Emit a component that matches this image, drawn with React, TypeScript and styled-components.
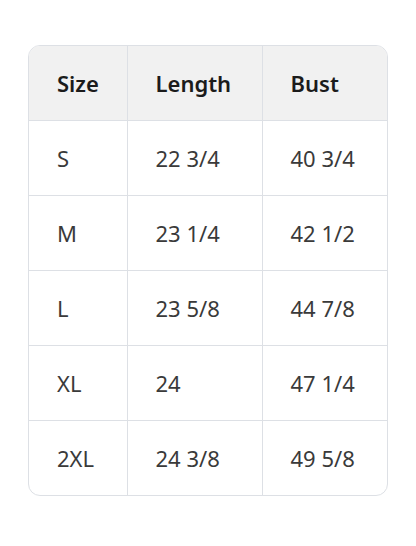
import React from "react";
import styled, { createGlobalStyle } from "styled-components";

const Global = createGlobalStyle`
  html, body { margin: 0; padding: 0; background: #ffffff; }
  body { font-family: "Noto Sans", "Open Sans", sans-serif; }
`;

const Page = styled.div`
  padding: 45px 0 0 28px;
`;

const Frame = styled.div`
  width: 360px;
  border: 1px solid #dde0e5;
  border-radius: 12px;
  overflow: hidden;
  box-sizing: border-box;
`;

const Table = styled.table`
  width: 100%;
  border-collapse: collapse;
  table-layout: fixed;
`;

const HeadRow = styled.tr`
  background: #f1f1f1;
`;

const Th = styled.th<{ $w: number }>`
  box-sizing: border-box;
  width: ${(p) => p.$w}px;
  height: 74px;
  padding: 0 0 0 28px;
  text-align: left;
  font-size: 22px;
  font-weight: 600;
  color: #1b1b1b;
  border-right: 1px solid #dde0e5;
  border-bottom: 1px solid #dde0e5;
  &:last-child { border-right: none; }
`;

const Td = styled.td`
  height: 74px;
  padding: 0 0 0 28px;
  font-size: 22px;
  font-weight: 400;
  color: #3a3a3a;
  border-right: 1px solid #dde0e5;
  border-bottom: 1px solid #dde0e5;
  &:last-child { border-right: none; }
  tr:last-child > & { border-bottom: none; }
`;

const rows = [
  ["S", "22 3/4", "40 3/4"],
  ["M", "23 1/4", "42 1/2"],
  ["L", "23 5/8", "44 7/8"],
  ["XL", "24", "47 1/4"],
  ["2XL", "24 3/8", "49 5/8"],
];

export default function App() {
  return (
    <Page>
      <Global />
      <Frame>
        <Table>
          <thead>
            <HeadRow>
              <Th $w={98}>Size</Th>
              <Th $w={135}>Length</Th>
              <Th $w={125}>Bust</Th>
            </HeadRow>
          </thead>
          <tbody>
            {rows.map((r) => (
              <tr key={r[0]}>
                {r.map((c, i) => (
                  <Td key={i}>{c}</Td>
                ))}
              </tr>
            ))}
          </tbody>
        </Table>
      </Frame>
    </Page>
  );
}
